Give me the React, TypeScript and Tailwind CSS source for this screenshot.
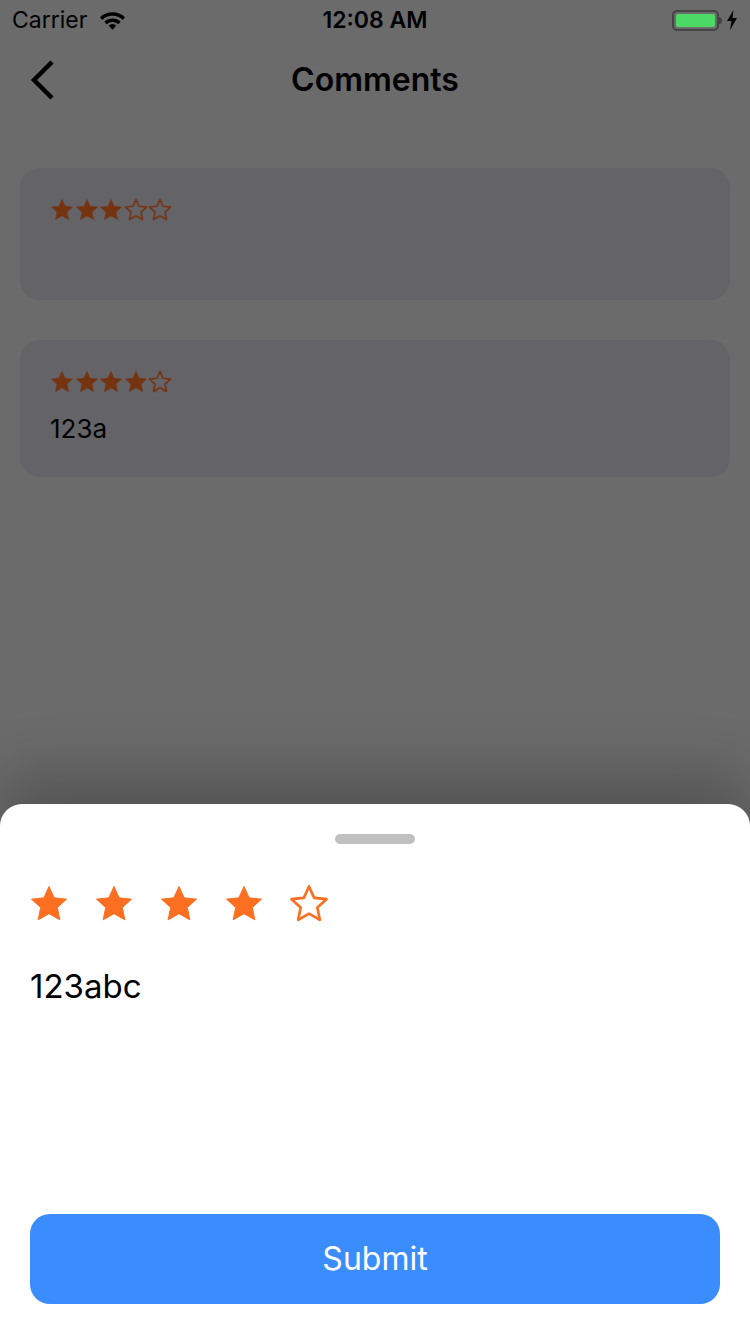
import React from 'react';

const STAR = '12,1.5 15.1,8.3 22.5,9.1 17,14.1 18.5,21.5 12,17.8 5.5,21.5 7,14.1 1.5,9.1 8.9,8.3';

const Star = ({ filled, size, color }: { filled: boolean; size: number; color: string }) => (
    <svg width={size} height={size} viewBox="0 0 24 24">
        <polygon
            points={STAR}
            fill={filled ? color : 'none'}
            stroke={color}
            strokeWidth={filled ? 0.6 : 1.6}
            strokeLinejoin="round"
        />
    </svg>
);

const Stars = ({ value, size, color, className }: { value: number; size: number; color: string; className: string }) => (
    <div className={className}>
        {[1, 2, 3, 4, 5].map((i) => (
            <Star key={i} filled={i <= value} size={size} color={color} />
        ))}
    </div>
);

const StatusBar = () => (
    <div className="relative flex h-10 items-center justify-between px-3 text-[23px] text-black">
        <div className="flex items-center gap-[10px]">
            <span>Carrier</span>
            <svg width="31" height="24" viewBox="0 0 28 22">
                <path d="M14 20 L10.5 16 A5 5 0 0 1 17.5 16 Z" fill="#000" />
                <path d="M6.5 12.5 A11 11 0 0 1 21.5 12.5 L19.3 14.9 A8 8 0 0 0 8.7 14.9 Z" fill="#000" />
                <path d="M2.5 8.5 A16.5 16.5 0 0 1 25.5 8.5 L23.3 10.9 A13.5 13.5 0 0 0 4.7 10.9 Z" fill="#000" />
            </svg>
        </div>
        <span className="absolute left-1/2 -translate-x-1/2 font-semibold">12:08 AM</span>
        <div className="flex items-center gap-1">
            <div className="flex items-center">
                <div className="h-[21px] w-[47px] rounded-[5px] border-2 border-[#444] p-[2px]">
                    <div className="h-full w-full rounded-[2px] bg-[#4cd964]" />
                </div>
                <div className="h-[7px] w-[3px] rounded-r-sm bg-[#444]" />
            </div>
            <svg width="12" height="20" viewBox="0 0 12 20">
                <path d="M7.5 0 L1 11 H5.5 L4 20 L11 8 H6.5 Z" fill="#000" />
            </svg>
        </div>
    </div>
);

const CommentCard = ({ rating, text }: { rating: number; text?: string }) => (
    <div className="min-h-[132px] rounded-[20px] bg-[#646368] px-[30px] pt-[30px] pb-[30px]">
        <Stars value={rating} size={24} color="#76330f" className="flex gap-[0.5px]" />
        {text && <div className="mt-[17px] text-[26px] leading-[36px] text-black">{text}</div>}
    </div>
);

export default function App() {
    return (
        <div className="flex h-[1334px] w-[750px] flex-col overflow-hidden bg-[#6b6b6b] font-['Inter','Liberation_Sans',sans-serif]">
            <StatusBar />
            <div className="relative flex h-20 items-center justify-center">
                <svg className="absolute left-[28px]" width="30" height="44" viewBox="0 0 30 44">
                    <path d="M24 4 L6 22 L24 40" fill="none" stroke="#000" strokeWidth="4.5" />
                </svg>
                <span className="text-[32px] font-semibold text-black">Comments</span>
            </div>
            <div className="flex flex-1 flex-col gap-10 px-5 pt-12">
                <CommentCard rating={3} />
                <CommentCard rating={4} text="123a" />
            </div>
            <div className="flex h-[530px] flex-col rounded-t-[22px] bg-white px-[30px] pb-[30px] shadow-[0_-30px_60px_rgba(0,0,0,0.22)]">
                <div className="mx-auto mt-[30px] h-[10px] w-[80px] rounded-full bg-[#c0c0c0]" />
                <Stars value={4} size={40} color="#fc6f21" className="mt-[40px] -ml-[1px] flex gap-[25px]" />
                <div className="mt-[42px] text-[33px] leading-[40px] text-black">123abc</div>
                <button className="mt-auto h-[90px] w-full rounded-[20px] bg-[#3b8cfc] text-[32px] text-white">
                    Submit
                </button>
            </div>
        </div>
    );
}
